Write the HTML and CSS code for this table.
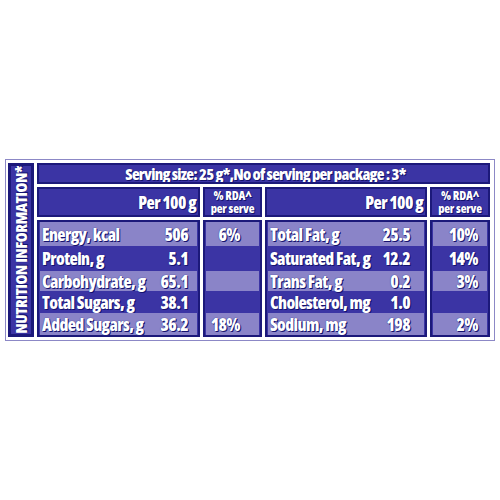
FILE: index.html
```html
<!DOCTYPE html>
<html>
<head>
<meta charset="utf-8">
<link rel="stylesheet" href="styles.css">
</head>
<body>
<div class="label">
  <div class="side"><span class="side-text">NUTRITION INFORMATION*</span></div>
  <div class="main">
    <div class="cell serving">Serving size: 25 g*,No of serving per package : 3*</div>
    <div class="cell head per">Per 100 g</div>
    <div class="cell head rda"><span>% RDA^</span><span>per serve</span></div>
    <div class="cell head per">Per 100 g</div>
    <div class="cell head rda"><span>% RDA^</span><span>per serve</span></div>

    <div class="cell data pad-l">
      <div class="row r1 light"><span>Energy, kcal</span><span>506</span></div>
      <div class="row r2"><span>Protein, g</span><span>5.1</span></div>
      <div class="row r3 light"><span>Carbohydrate, g</span><span>65.1</span></div>
      <div class="row r4"><span>Total Sugars, g</span><span>38.1</span></div>
      <div class="row r5 light"><span>Added Sugars, g</span><span>36.2</span></div>
    </div>
    <div class="cell data rda-l">
      <div class="row r1 light"><span></span><span>6%</span></div>
      <div class="row r2"></div>
      <div class="row r3 light"></div>
      <div class="row r4"></div>
      <div class="row r5 light"><span></span><span>18%</span></div>
    </div>
    <div class="cell data pad-r">
      <div class="row r1 light"><span>Total Fat, g</span><span>25.5</span></div>
      <div class="row r2"><span>Saturated Fat, g</span><span>12.2</span></div>
      <div class="row r3 light"><span>Trans Fat, g</span><span>0.2</span></div>
      <div class="row r4"><span>Cholesterol, mg</span><span>1.0</span></div>
      <div class="row r5 light"><span>Sodium, mg</span><span>198</span></div>
    </div>
    <div class="cell data rda-r">
      <div class="row r1 light"><span></span><span>10%</span></div>
      <div class="row r2"><span></span><span>14%</span></div>
      <div class="row r3 light"><span></span><span>3%</span></div>
      <div class="row r4"></div>
      <div class="row r5 light"><span></span><span>2%</span></div>
    </div>
  </div>
</div>
</body>
</html>
```
FILE: styles.css
```css
html, body {
  margin: 0;
  padding: 0;
  background: #ffffff;
}
body {
  font-family: "Open Sans", "Liberation Sans", sans-serif;
  font-stretch: 75%;
  font-weight: 800;
  color: #ffffff;
}
.label {
  margin: 159px 0 0 5px;
  border: 1px solid #8c88c6;
  padding: 3px 3px 3px 2px;
  box-sizing: content-box;
  display: flex;
  gap: 3px;
  width: 483px;
  height: 174px;
}
.side {
  width: 26px;
  box-sizing: border-box;
  border: 3px solid #1c197a;
  background: #3b34a4;
  display: flex;
  align-items: center;
  justify-content: center;
  overflow: hidden;
}
.side-text {
  writing-mode: vertical-rl;
  transform: rotate(180deg);
  font-size: 16px;
  line-height: 16px;
  letter-spacing: -0.5px;
  white-space: nowrap;
  text-shadow: 1px 1px 0 #14126e, 0 0 1px #14126e;
}
.main {
  flex: 1;
  display: grid;
  grid-template-columns: 163px 59px 162px 60px;
  grid-template-rows: 21px 30px 117px;
  column-gap: 3px;
  row-gap: 3px;
}
.cell {
  box-sizing: border-box;
  border: 2px solid #1c197a;
  background: #3b34a4;
  text-shadow: 1px 1px 0 #14126e, 0 0 1px #14126e;
  overflow: hidden;
}
.serving {
  grid-column: 1 / 5;
  display: flex;
  align-items: center;
  justify-content: center;
  font-size: 16px;
  letter-spacing: -0.75px;
  padding-left: 4px;
}
.head.per {
  display: flex;
  align-items: center;
  justify-content: flex-end;
  padding-right: 2px;
  font-size: 17px;
  letter-spacing: -0.6px;
}
.head.rda {
  display: flex;
  flex-direction: column;
  align-items: center;
  justify-content: center;
  font-size: 12px;
  line-height: 13px;
  letter-spacing: -0.2px;
}
.data {
  display: flex;
  flex-direction: column;
  font-size: 17px;
  letter-spacing: -0.6px;
}
.row {
  display: flex;
  justify-content: space-between;
  align-items: center;
  white-space: nowrap;
}
.row.light {
  background: #8a84c8;
  margin: 0 1px;
}
.r1 { height: 24px; }
.r2 { height: 25px; }
.r3 { height: 20px; }
.r4 { height: 22px; }
.r5 { height: 22px; }
.pad-l .row { padding: 0 10px 0 3px; }
.pad-l .row.light { padding: 0 9px 0 2px; }
.pad-r .row { padding: 0 15px 0 3px; }
.pad-r .row.light { padding: 0 14px 0 2px; }
.rda-l .row { padding: 0 20px 0 0; }
.rda-l .row.light { padding: 0 19px 0 0; }
.rda-r .row { padding: 0 10px 0 0; }
.rda-r .row.light { padding: 0 9px 0 0; }
```
